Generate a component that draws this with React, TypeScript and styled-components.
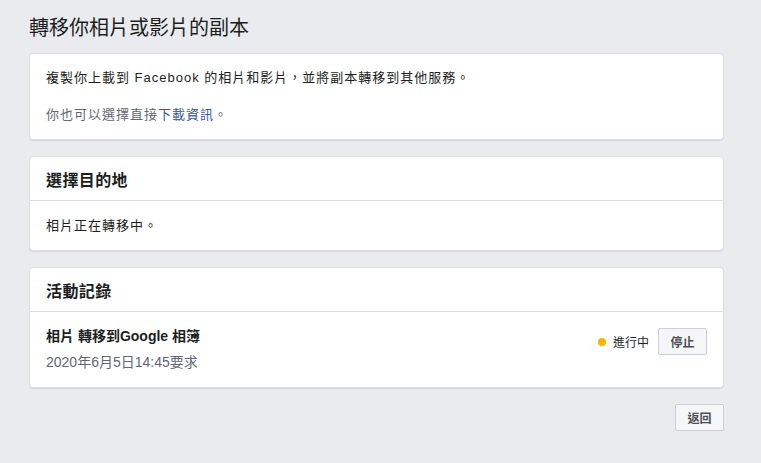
import React from "react";
import styled, { createGlobalStyle } from "styled-components";

const Global = createGlobalStyle`
  html, body {
    margin: 0;
    padding: 0;
    background: #e9ebee;
  }
  body {
    font-family: "Liberation Sans", Arial, "Noto Sans CJK TC", sans-serif;
    color: #1c1e21;
  }
`;

const Page = styled.div`
  width: 695px;
  padding: 16px 0 20px 29px;
  display: flex;
  flex-direction: column;
`;

const Title = styled.h1`
  margin: 0 0 13px;
  font-size: 20px;
  line-height: 24px;
  font-weight: normal;
  color: #1c1e21;
`;

const Card = styled.section`
  background: #fff;
  border: 1px solid #dddfe2;
  border-radius: 4px;
  box-shadow: 0 1px 1px rgba(0, 0, 0, 0.08);
  margin-bottom: 16px;
`;

const CardHeader = styled.div`
  padding: 0 16px;
  height: 43px;
  display: flex;
  align-items: center;
  border-bottom: 1px solid #dddfe2;
  font-size: 16px;
  letter-spacing: 0.4px;
  font-weight: bold;
  color: #1c1e21;
`;

const CardBody = styled.div<{ $gap?: number; $top?: number }>`
  padding: ${(p) => p.$top ?? 16}px 16px 16px;
  display: flex;
  flex-direction: column;
  gap: ${(p) => p.$gap ?? 0}px;
`;

const Text = styled.p<{ $muted?: boolean }>`
  margin: 0;
  font-size: 13px;
  letter-spacing: 1px;
  line-height: 16px;
  color: ${(p) => (p.$muted ? "#606770" : "#1c1e21")};
`;

const Link = styled.a`
  color: #385898;
  text-decoration: none;
  cursor: pointer;
`;

const Row = styled.div`
  display: flex;
  align-items: flex-start;
  justify-content: space-between;
  padding: 16px 16px 16px;
`;

const RowInfo = styled.div`
  display: flex;
  flex-direction: column;
  gap: 9px;
`;

const RowTitle = styled.div`
  font-size: 14px;
  line-height: 17px;
  font-weight: bold;
  color: #1c1e21;
`;

const RowDate = styled.div`
  font-size: 14px;
  line-height: 17px;
  color: #606770;
`;

const RowActions = styled.div`
  display: flex;
  align-items: center;
  gap: 9px;
`;

const Status = styled.div`
  display: flex;
  align-items: center;
  gap: 7px;
  font-size: 12px;
  color: #1c1e21;
`;

const Dot = styled.span`
  width: 8px;
  height: 8px;
  border-radius: 50%;
  background: #fcb400;
`;

const Button = styled.button`
  height: 27px;
  padding: 0 11px;
  min-width: 49px;
  background: #f5f6f7;
  border: 1px solid #ccd0d5;
  border-radius: 2px;
  font-family: inherit;
  font-size: 12px;
  font-weight: bold;
  color: #4b4f56;
  cursor: pointer;
`;

const Footer = styled.div`
  display: flex;
  justify-content: flex-end;
`;

export default function App() {
  return (
    <>
      <Global />
      <Page>
        <Title>轉移你相片或影片的副本</Title>
        <Card>
          <CardBody $gap={21}>
            <Text>複製你上載到 Facebook 的相片和影片，並將副本轉移到其他服務。</Text>
            <Text $muted>
              你也可以選擇直接<Link>下載資訊</Link>。
            </Text>
          </CardBody>
        </Card>
        <Card>
          <CardHeader>選擇目的地</CardHeader>
          <CardBody $top={17}>
            <Text>相片正在轉移中。</Text>
          </CardBody>
        </Card>
        <Card>
          <CardHeader>活動記錄</CardHeader>
          <Row>
            <RowInfo>
              <RowTitle>相片 轉移到Google 相簿</RowTitle>
              <RowDate>2020年6月5日14:45要求</RowDate>
            </RowInfo>
            <RowActions>
              <Status>
                <Dot />
                進行中
              </Status>
              <Button>停止</Button>
            </RowActions>
          </Row>
        </Card>
        <Footer>
          <Button>返回</Button>
        </Footer>
      </Page>
    </>
  );
}
